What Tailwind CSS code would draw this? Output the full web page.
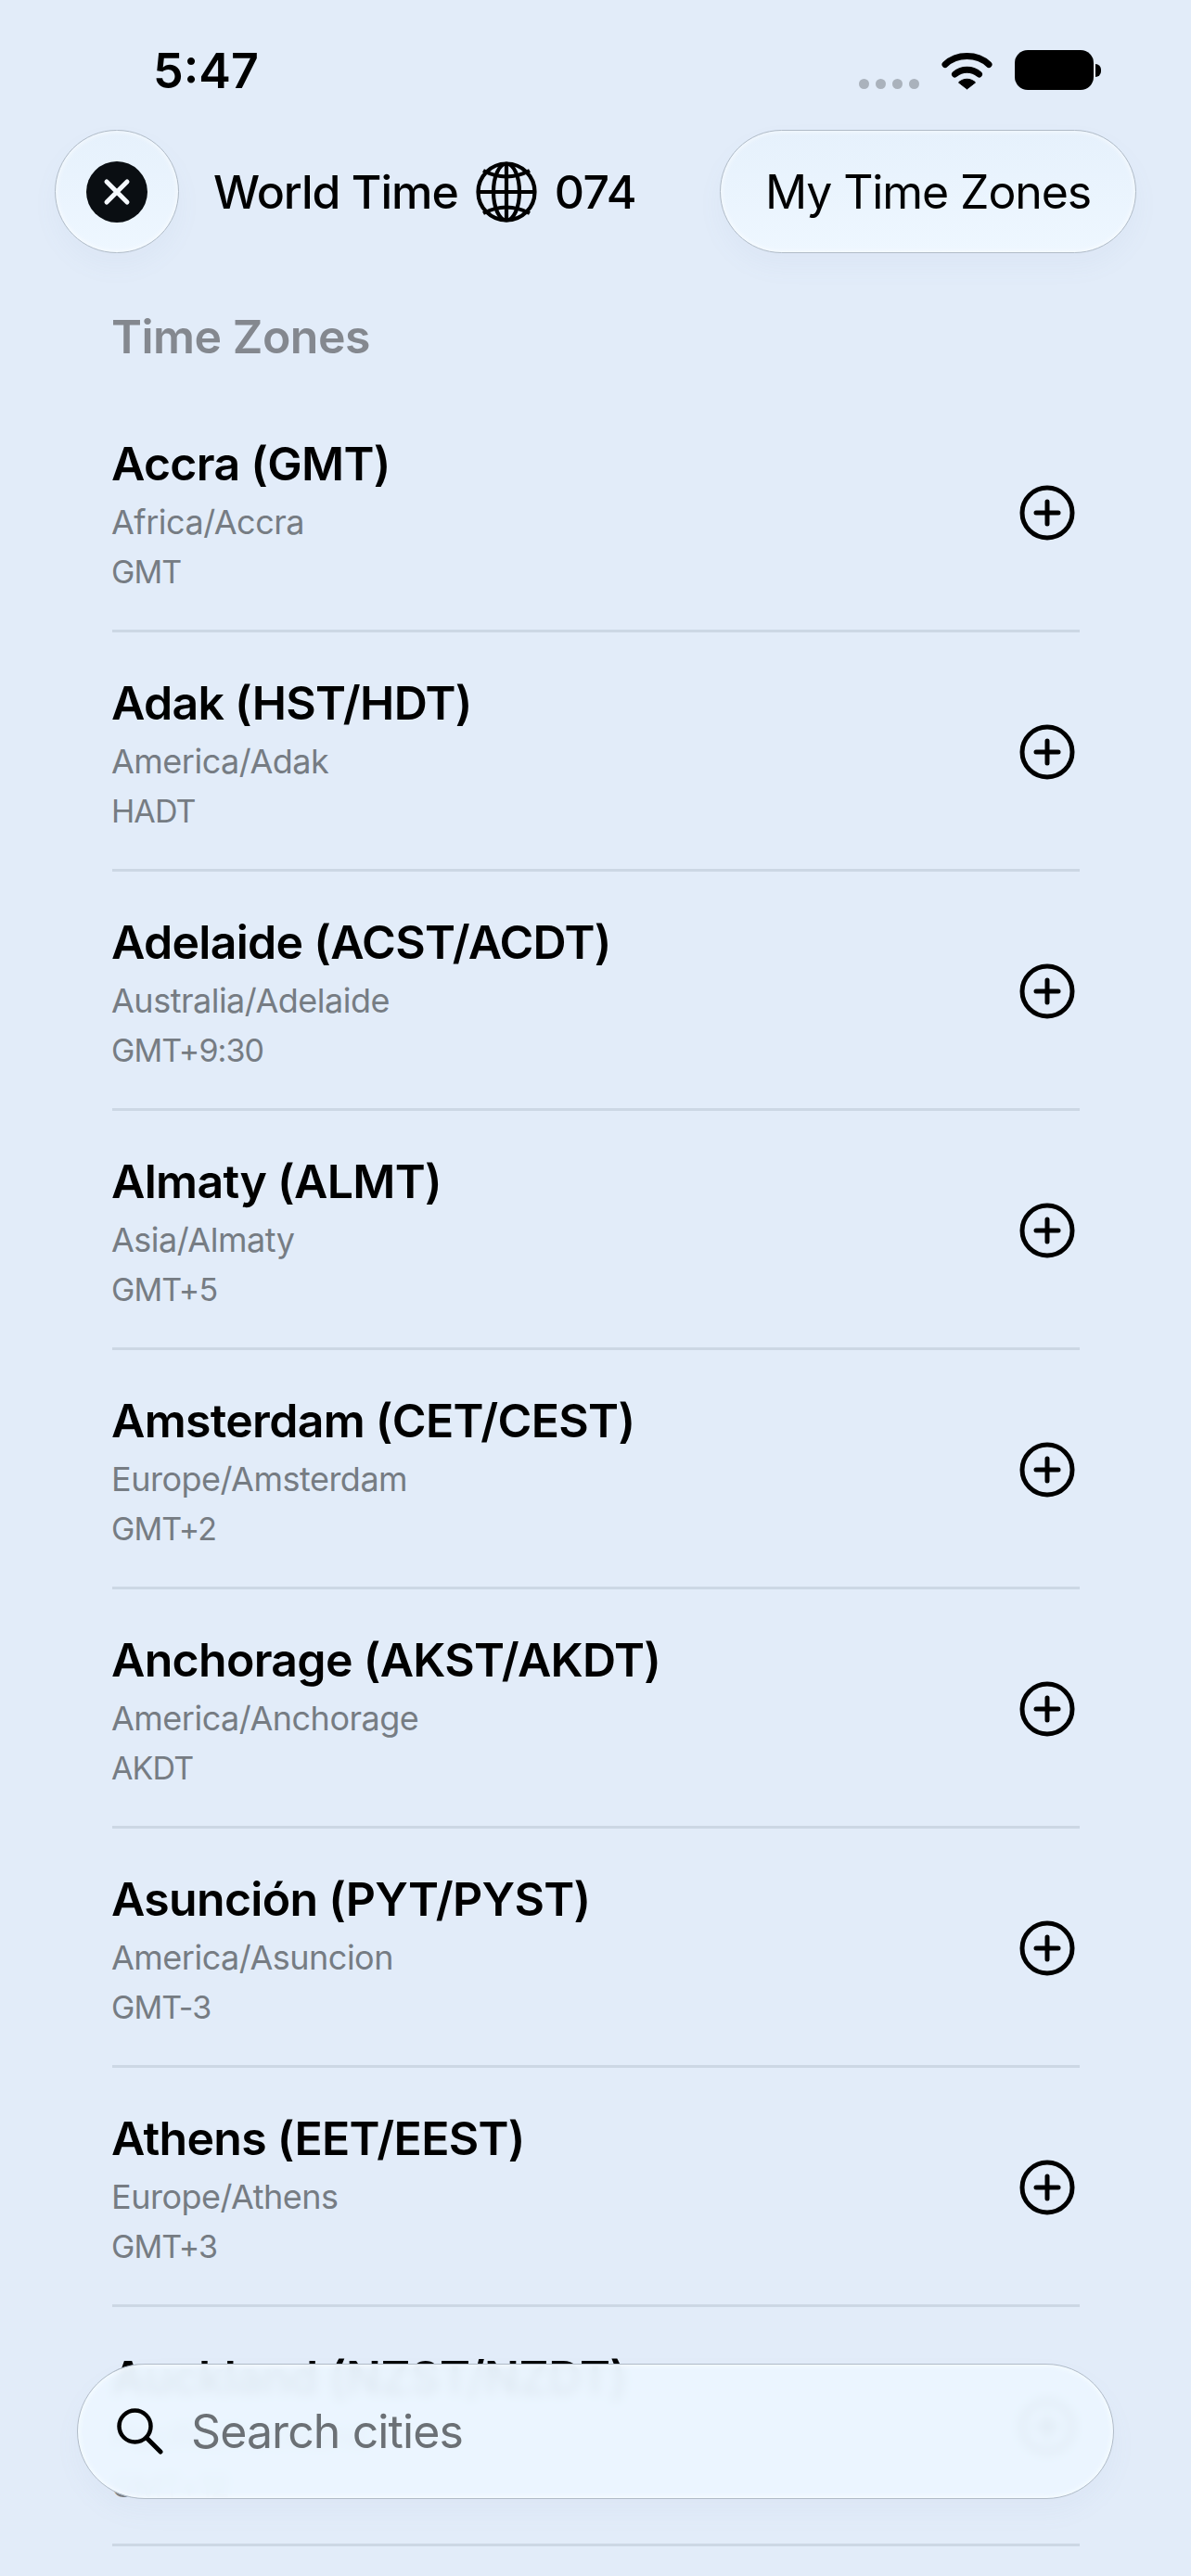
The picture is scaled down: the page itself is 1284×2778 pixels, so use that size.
<!DOCTYPE html>
<html lang="en">

<head>
  <meta charset="UTF-8" />
  <meta name="viewport" content="width=device-width, initial-scale=1.0" />
  <title>World Time</title>
  <script src="https://cdn.jsdelivr.net/npm/@tailwindcss/browser@4"></script>
</head>

<body class="bg-[#e2ecf9]">
  <div class="relative w-[1284px] h-[2778px] overflow-hidden font-['Inter',sans-serif] text-black">

    <!-- Status bar -->
    <div class="flex h-[140px] items-start pl-[165px] pr-[97px]">
      <div class="mt-[47px] text-[52px] leading-[60px] font-semibold">5:47</div>
      <div class="ml-auto flex items-start mt-[54px]">
        <div class="flex gap-[7px] mt-[31px] mr-[24px]">
          <span class="w-[11px] h-[11px] rounded-full bg-[#aab2bc]"></span>
          <span class="w-[11px] h-[11px] rounded-full bg-[#aab2bc]"></span>
          <span class="w-[11px] h-[11px] rounded-full bg-[#aab2bc]"></span>
          <span class="w-[11px] h-[11px] rounded-full bg-[#aab2bc]"></span>
        </div>
        <svg class="w-[55px] h-[43px] mr-[24px]" viewBox="0 0 55 43" fill="none">
          <path d="M4 15.5C16.5 3.5 38.5 3.5 51 15.5" stroke="#000" stroke-width="7" stroke-linecap="round" />
          <path d="M14.5 26C21.5 19.5 33.5 19.5 40.5 26" stroke="#000" stroke-width="7" stroke-linecap="round" />
          <path d="M27.5 42L18.5 35C23.5 30 31.5 30 36.5 35Z" fill="#000" stroke="#000" stroke-width="1" stroke-linejoin="round" />
        </svg>
        <div class="w-[85px] h-[43px] rounded-[14px] bg-black"></div>
        <div class="w-[6px] h-[14px] mt-[15px] ml-[2px] rounded-r-full bg-black"></div>
      </div>
    </div>

    <!-- Nav -->
    <div class="flex items-center h-[133px] px-[59px]">
      <button class="flex items-center justify-center w-[134px] h-[133px] rounded-full border-[1.5px] border-[#b0bbc7] bg-gradient-to-b from-[#e6f1fc] to-[#eef7ff] shadow-[0_14px_28px_rgba(120,140,170,0.05),inset_0_0_6px_rgba(255,255,255,0.9)]">
        <span class="flex items-center justify-center w-[66px] h-[66px] rounded-full bg-[#0a0e12]">
          <svg class="w-[30px] h-[30px]" viewBox="0 0 30 30" fill="none">
            <path d="M4 4L26 26M26 4L4 26" stroke="#f4f8fc" stroke-width="5" stroke-linecap="round" />
          </svg>
        </span>
      </button>
      <div class="ml-[37px] text-[50px] leading-[60px] font-medium tracking-[-1px]">World Time</div>
      <svg class="w-[66px] h-[66px] ml-[19px]" viewBox="0 0 66 66" fill="none" stroke="#000" stroke-width="4.2">
        <circle cx="33" cy="33" r="30.5" />
        <ellipse cx="33" cy="33" rx="14" ry="30.5" />
        <path d="M33 2V64M2 33H64" />
        <path d="M8 10Q33 23 58 10M8 56Q33 43 58 56" />
      </svg>
      <div class="ml-[19px] text-[50px] leading-[60px] font-medium tracking-[-0.5px]">074</div>
      <button class="ml-auto flex items-center justify-center w-[449px] h-[133px] rounded-full border-[1.5px] border-[#b0bbc7] bg-gradient-to-b from-[#e6f1fc] to-[#eef7ff] shadow-[0_14px_28px_rgba(120,140,170,0.05),inset_0_0_6px_rgba(255,255,255,0.9)] text-[50px] leading-[60px] tracking-[-1.1px]">My Time Zones</button>
    </div>

    <!-- List -->
    <div class="mt-[60px] ml-[121px] w-[1043px]">
      <h2 class="-ml-px mb-[31px] text-[50px] leading-[60px] font-semibold tracking-[-0.5px] text-[#84888f]">Time Zones</h2>

      <div class="flex justify-between h-[258px] pt-[46px] pr-[5px] border-b-[3px] border-[#ccd7e4]">
        <div class="-ml-px">
          <div class="text-[50px] leading-[60px] font-semibold tracking-[-0.7px]">Accra (GMT)</div>
          <div class="mt-[7px] text-[36px] leading-[53px] tracking-[-0.5px] text-[#767c83]">Africa/Accra</div>
          <div class="text-[34px] leading-[53px] tracking-[-0.9px] text-[#767c83]">GMT</div>
        </div>
        <svg class="w-[60px] h-[60px] mt-[53px]" viewBox="0 0 60 60" fill="none" stroke="#000" stroke-width="5" stroke-linecap="round"><circle cx="30" cy="30" r="27" /><path d="M30 18V42M18 30H42" /></svg>
      </div>

      <div class="flex justify-between h-[258px] pt-[46px] pr-[5px] border-b-[3px] border-[#ccd7e4]">
        <div class="-ml-px">
          <div class="text-[50px] leading-[60px] font-semibold tracking-[-0.7px]">Adak (HST/HDT)</div>
          <div class="mt-[7px] text-[36px] leading-[53px] tracking-[-0.5px] text-[#767c83]">America/Adak</div>
          <div class="text-[34px] leading-[53px] tracking-[-0.9px] text-[#767c83]">HADT</div>
        </div>
        <svg class="w-[60px] h-[60px] mt-[53px]" viewBox="0 0 60 60" fill="none" stroke="#000" stroke-width="5" stroke-linecap="round"><circle cx="30" cy="30" r="27" /><path d="M30 18V42M18 30H42" /></svg>
      </div>

      <div class="flex justify-between h-[258px] pt-[46px] pr-[5px] border-b-[3px] border-[#ccd7e4]">
        <div class="-ml-px">
          <div class="text-[50px] leading-[60px] font-semibold tracking-[-0.7px]">Adelaide (ACST/ACDT)</div>
          <div class="mt-[7px] text-[36px] leading-[53px] tracking-[-0.5px] text-[#767c83]">Australia/Adelaide</div>
          <div class="text-[34px] leading-[53px] tracking-[-0.9px] text-[#767c83]">GMT+9:30</div>
        </div>
        <svg class="w-[60px] h-[60px] mt-[53px]" viewBox="0 0 60 60" fill="none" stroke="#000" stroke-width="5" stroke-linecap="round"><circle cx="30" cy="30" r="27" /><path d="M30 18V42M18 30H42" /></svg>
      </div>

      <div class="flex justify-between h-[258px] pt-[46px] pr-[5px] border-b-[3px] border-[#ccd7e4]">
        <div class="-ml-px">
          <div class="text-[50px] leading-[60px] font-semibold tracking-[-0.7px]">Almaty (ALMT)</div>
          <div class="mt-[7px] text-[36px] leading-[53px] tracking-[-0.5px] text-[#767c83]">Asia/Almaty</div>
          <div class="text-[34px] leading-[53px] tracking-[-0.9px] text-[#767c83]">GMT+5</div>
        </div>
        <svg class="w-[60px] h-[60px] mt-[53px]" viewBox="0 0 60 60" fill="none" stroke="#000" stroke-width="5" stroke-linecap="round"><circle cx="30" cy="30" r="27" /><path d="M30 18V42M18 30H42" /></svg>
      </div>

      <div class="flex justify-between h-[258px] pt-[46px] pr-[5px] border-b-[3px] border-[#ccd7e4]">
        <div class="-ml-px">
          <div class="text-[50px] leading-[60px] font-semibold tracking-[-0.7px]">Amsterdam (CET/CEST)</div>
          <div class="mt-[7px] text-[36px] leading-[53px] tracking-[-0.5px] text-[#767c83]">Europe/Amsterdam</div>
          <div class="text-[34px] leading-[53px] tracking-[-0.9px] text-[#767c83]">GMT+2</div>
        </div>
        <svg class="w-[60px] h-[60px] mt-[53px]" viewBox="0 0 60 60" fill="none" stroke="#000" stroke-width="5" stroke-linecap="round"><circle cx="30" cy="30" r="27" /><path d="M30 18V42M18 30H42" /></svg>
      </div>

      <div class="flex justify-between h-[258px] pt-[46px] pr-[5px] border-b-[3px] border-[#ccd7e4]">
        <div class="-ml-px">
          <div class="text-[50px] leading-[60px] font-semibold tracking-[-0.7px]">Anchorage (AKST/AKDT)</div>
          <div class="mt-[7px] text-[36px] leading-[53px] tracking-[-0.5px] text-[#767c83]">America/Anchorage</div>
          <div class="text-[34px] leading-[53px] tracking-[-0.9px] text-[#767c83]">AKDT</div>
        </div>
        <svg class="w-[60px] h-[60px] mt-[53px]" viewBox="0 0 60 60" fill="none" stroke="#000" stroke-width="5" stroke-linecap="round"><circle cx="30" cy="30" r="27" /><path d="M30 18V42M18 30H42" /></svg>
      </div>

      <div class="flex justify-between h-[258px] pt-[46px] pr-[5px] border-b-[3px] border-[#ccd7e4]">
        <div class="-ml-px">
          <div class="text-[50px] leading-[60px] font-semibold tracking-[-0.7px]">Asunción (PYT/PYST)</div>
          <div class="mt-[7px] text-[36px] leading-[53px] tracking-[-0.5px] text-[#767c83]">America/Asuncion</div>
          <div class="text-[34px] leading-[53px] tracking-[-0.9px] text-[#767c83]">GMT-3</div>
        </div>
        <svg class="w-[60px] h-[60px] mt-[53px]" viewBox="0 0 60 60" fill="none" stroke="#000" stroke-width="5" stroke-linecap="round"><circle cx="30" cy="30" r="27" /><path d="M30 18V42M18 30H42" /></svg>
      </div>

      <div class="flex justify-between h-[258px] pt-[46px] pr-[5px] border-b-[3px] border-[#ccd7e4]">
        <div class="-ml-px">
          <div class="text-[50px] leading-[60px] font-semibold tracking-[-0.7px]">Athens (EET/EEST)</div>
          <div class="mt-[7px] text-[36px] leading-[53px] tracking-[-0.5px] text-[#767c83]">Europe/Athens</div>
          <div class="text-[34px] leading-[53px] tracking-[-0.9px] text-[#767c83]">GMT+3</div>
        </div>
        <svg class="w-[60px] h-[60px] mt-[53px]" viewBox="0 0 60 60" fill="none" stroke="#000" stroke-width="5" stroke-linecap="round"><circle cx="30" cy="30" r="27" /><path d="M30 18V42M18 30H42" /></svg>
      </div>

      <div class="flex justify-between h-[258px] pt-[46px] pr-[5px] border-b-[3px] border-[#ccd7e4]">
        <div class="-ml-px">
          <div class="text-[50px] leading-[60px] font-semibold tracking-[-0.7px]">Auckland (NZST/NZDT)</div>
          <div class="mt-[7px] text-[36px] leading-[53px] tracking-[-0.5px] text-[#767c83]">Pacific/Auckland</div>
          <div class="text-[34px] leading-[53px] tracking-[-0.9px] text-[#767c83]">GMT+12</div>
        </div>
        <svg class="w-[60px] h-[60px] mt-[53px]" viewBox="0 0 60 60" fill="none" stroke="#000" stroke-width="5" stroke-linecap="round"><circle cx="30" cy="30" r="27" /><path d="M30 18V42M18 30H42" /></svg>
      </div>
    </div>

    <!-- Search bar floats over the list -->
    <div class="absolute left-[83px] top-[2549px] flex items-center w-[1118px] h-[146px] pl-[42px] rounded-full border-[1.5px] border-[#b0bbc7] bg-[#ebf5ff]/95 backdrop-blur-[6px] shadow-[0_14px_28px_rgba(120,140,170,0.05),inset_0_0_6px_rgba(255,255,255,0.9)]">
      <svg class="w-[50px] h-[50px]" viewBox="0 0 50 50" fill="none" stroke="#000" stroke-width="4.5" stroke-linecap="round">
        <circle cx="19.5" cy="19.5" r="17" />
        <path d="M32 32L47 47" stroke-width="5" />
      </svg>
      <span class="ml-[30px] text-[50px] leading-[60px] tracking-[-0.9px] text-[#6b7075]">Search cities</span>
    </div>
  </div>
</body>

</html>
